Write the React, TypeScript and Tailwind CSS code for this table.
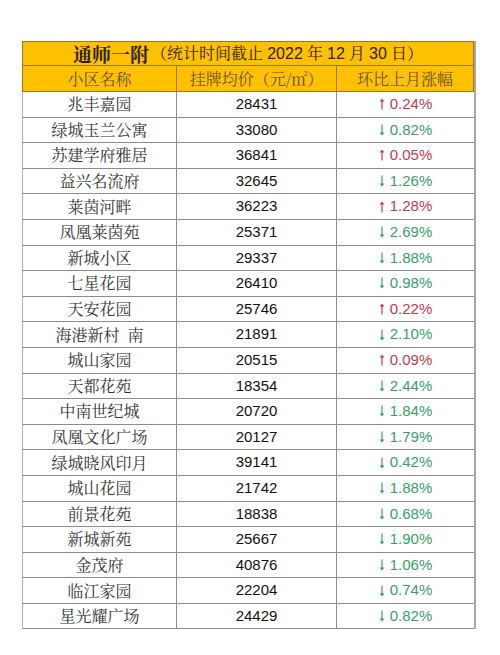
const rows: [string, string, boolean, string][] = [
  ["兆丰嘉园", "28431", true, "0.24%"],
  ["绿城玉兰公寓", "33080", false, "0.82%"],
  ["苏建学府雅居", "36841", true, "0.05%"],
  ["益兴名流府", "32645", false, "1.26%"],
  ["莱茵河畔", "36223", true, "1.28%"],
  ["凤凰莱茵苑", "25371", false, "2.69%"],
  ["新城小区", "29337", false, "1.88%"],
  ["七星花园", "26410", false, "0.98%"],
  ["天安花园", "25746", true, "0.22%"],
  ["海港新村  南", "21891", false, "2.10%"],
  ["城山家园", "20515", true, "0.09%"],
  ["天都花苑", "18354", false, "2.44%"],
  ["中南世纪城", "20720", false, "1.84%"],
  ["凤凰文化广场", "20127", false, "1.79%"],
  ["绿城晓风印月", "39141", false, "0.42%"],
  ["城山花园", "21742", false, "1.88%"],
  ["前景花苑", "18838", false, "0.68%"],
  ["新城新苑", "25667", false, "1.90%"],
  ["金茂府", "40876", false, "1.06%"],
  ["临江家园", "22204", false, "0.74%"],
  ["星光耀广场", "24429", false, "0.82%"],
];

const cjk = "font-['Noto_Serif_CJK_SC','Noto_Sans_CJK_SC',serif]";
const num = "font-['Liberation_Sans','Noto_Sans_CJK_SC',sans-serif]";

function Arrow({ up }: { up: boolean }) {
  return (
    <svg width="6" height="12" viewBox="0 0 6 12" className="mr-[5px]">
      {up ? (
        <>
          <path d="M3 11.5V2" stroke="currentColor" strokeWidth="1.2" />
          <path d="M0.6 3.6L3 0.4L5.4 3.6Z" fill="currentColor" />
        </>
      ) : (
        <>
          <path d="M3 0.5V10" stroke="currentColor" strokeWidth="1.2" />
          <path d="M0.6 8.4L3 11.6L5.4 8.4Z" fill="currentColor" />
        </>
      )}
    </svg>
  );
}

export default function App() {
  return (
    <div className="w-[500px] h-[655px] bg-white pt-[41px] pl-[22px]">
      <div className="w-[454px] border-r-2 border-r-[#a8a8a8]">
        {/* title */}
        <div className="h-[25px] bg-[#ffc000] border border-[#9a7a20] flex items-center justify-center text-[#2e2300]">
          <span className={`${cjk} text-[19px] font-bold leading-none`}>通师一附</span>
          <span className={`${cjk} text-[16px] leading-none ml-[2px]`}>
            （统计时间截止 <span className={num}>2022</span> 年 <span className={num}>12</span> 月{" "}
            <span className={num}>30</span> 日）
          </span>
        </div>
        {/* header */}
        <div className="h-[26px] bg-[#ffc000] border-x border-b border-[#9a7a20] grid grid-cols-[154px_160px_1fr] text-[#6a5418] text-[16px]">
          <div className={`${cjk} flex items-center justify-center border-r border-[#9a7a20]`}>小区名称</div>
          <div className={`${cjk} flex items-center justify-center border-r border-[#9a7a20]`}>
            挂牌均价（元/㎡）
          </div>
          <div className={`${cjk} flex items-center justify-center`}>环比上月涨幅</div>
        </div>
        {rows.map(([name, price, up, pct]) => (
          <div
            key={name}
            className="h-[25.6px] grid grid-cols-[154px_160px_1fr] border-b border-[#8c8c8c] border-l border-l-[#b0b0b0]"
          >
            <div className={`${cjk} flex items-center justify-center border-r border-[#8c8c8c] text-[16px] text-[#333] whitespace-pre`}>
              {name}
            </div>
            <div className={`${num} flex items-center justify-center border-r border-[#8c8c8c] text-[15px] text-[#111]`}>
              {price}
            </div>
            <div
              className={`${num} flex items-center justify-center text-[15px] ${
                up ? "text-[#c33c4c]" : "text-[#3a9e6a]"
              }`}
            >
              <Arrow up={up} />
              {pct}
            </div>
          </div>
        ))}
      </div>
    </div>
  );
}
